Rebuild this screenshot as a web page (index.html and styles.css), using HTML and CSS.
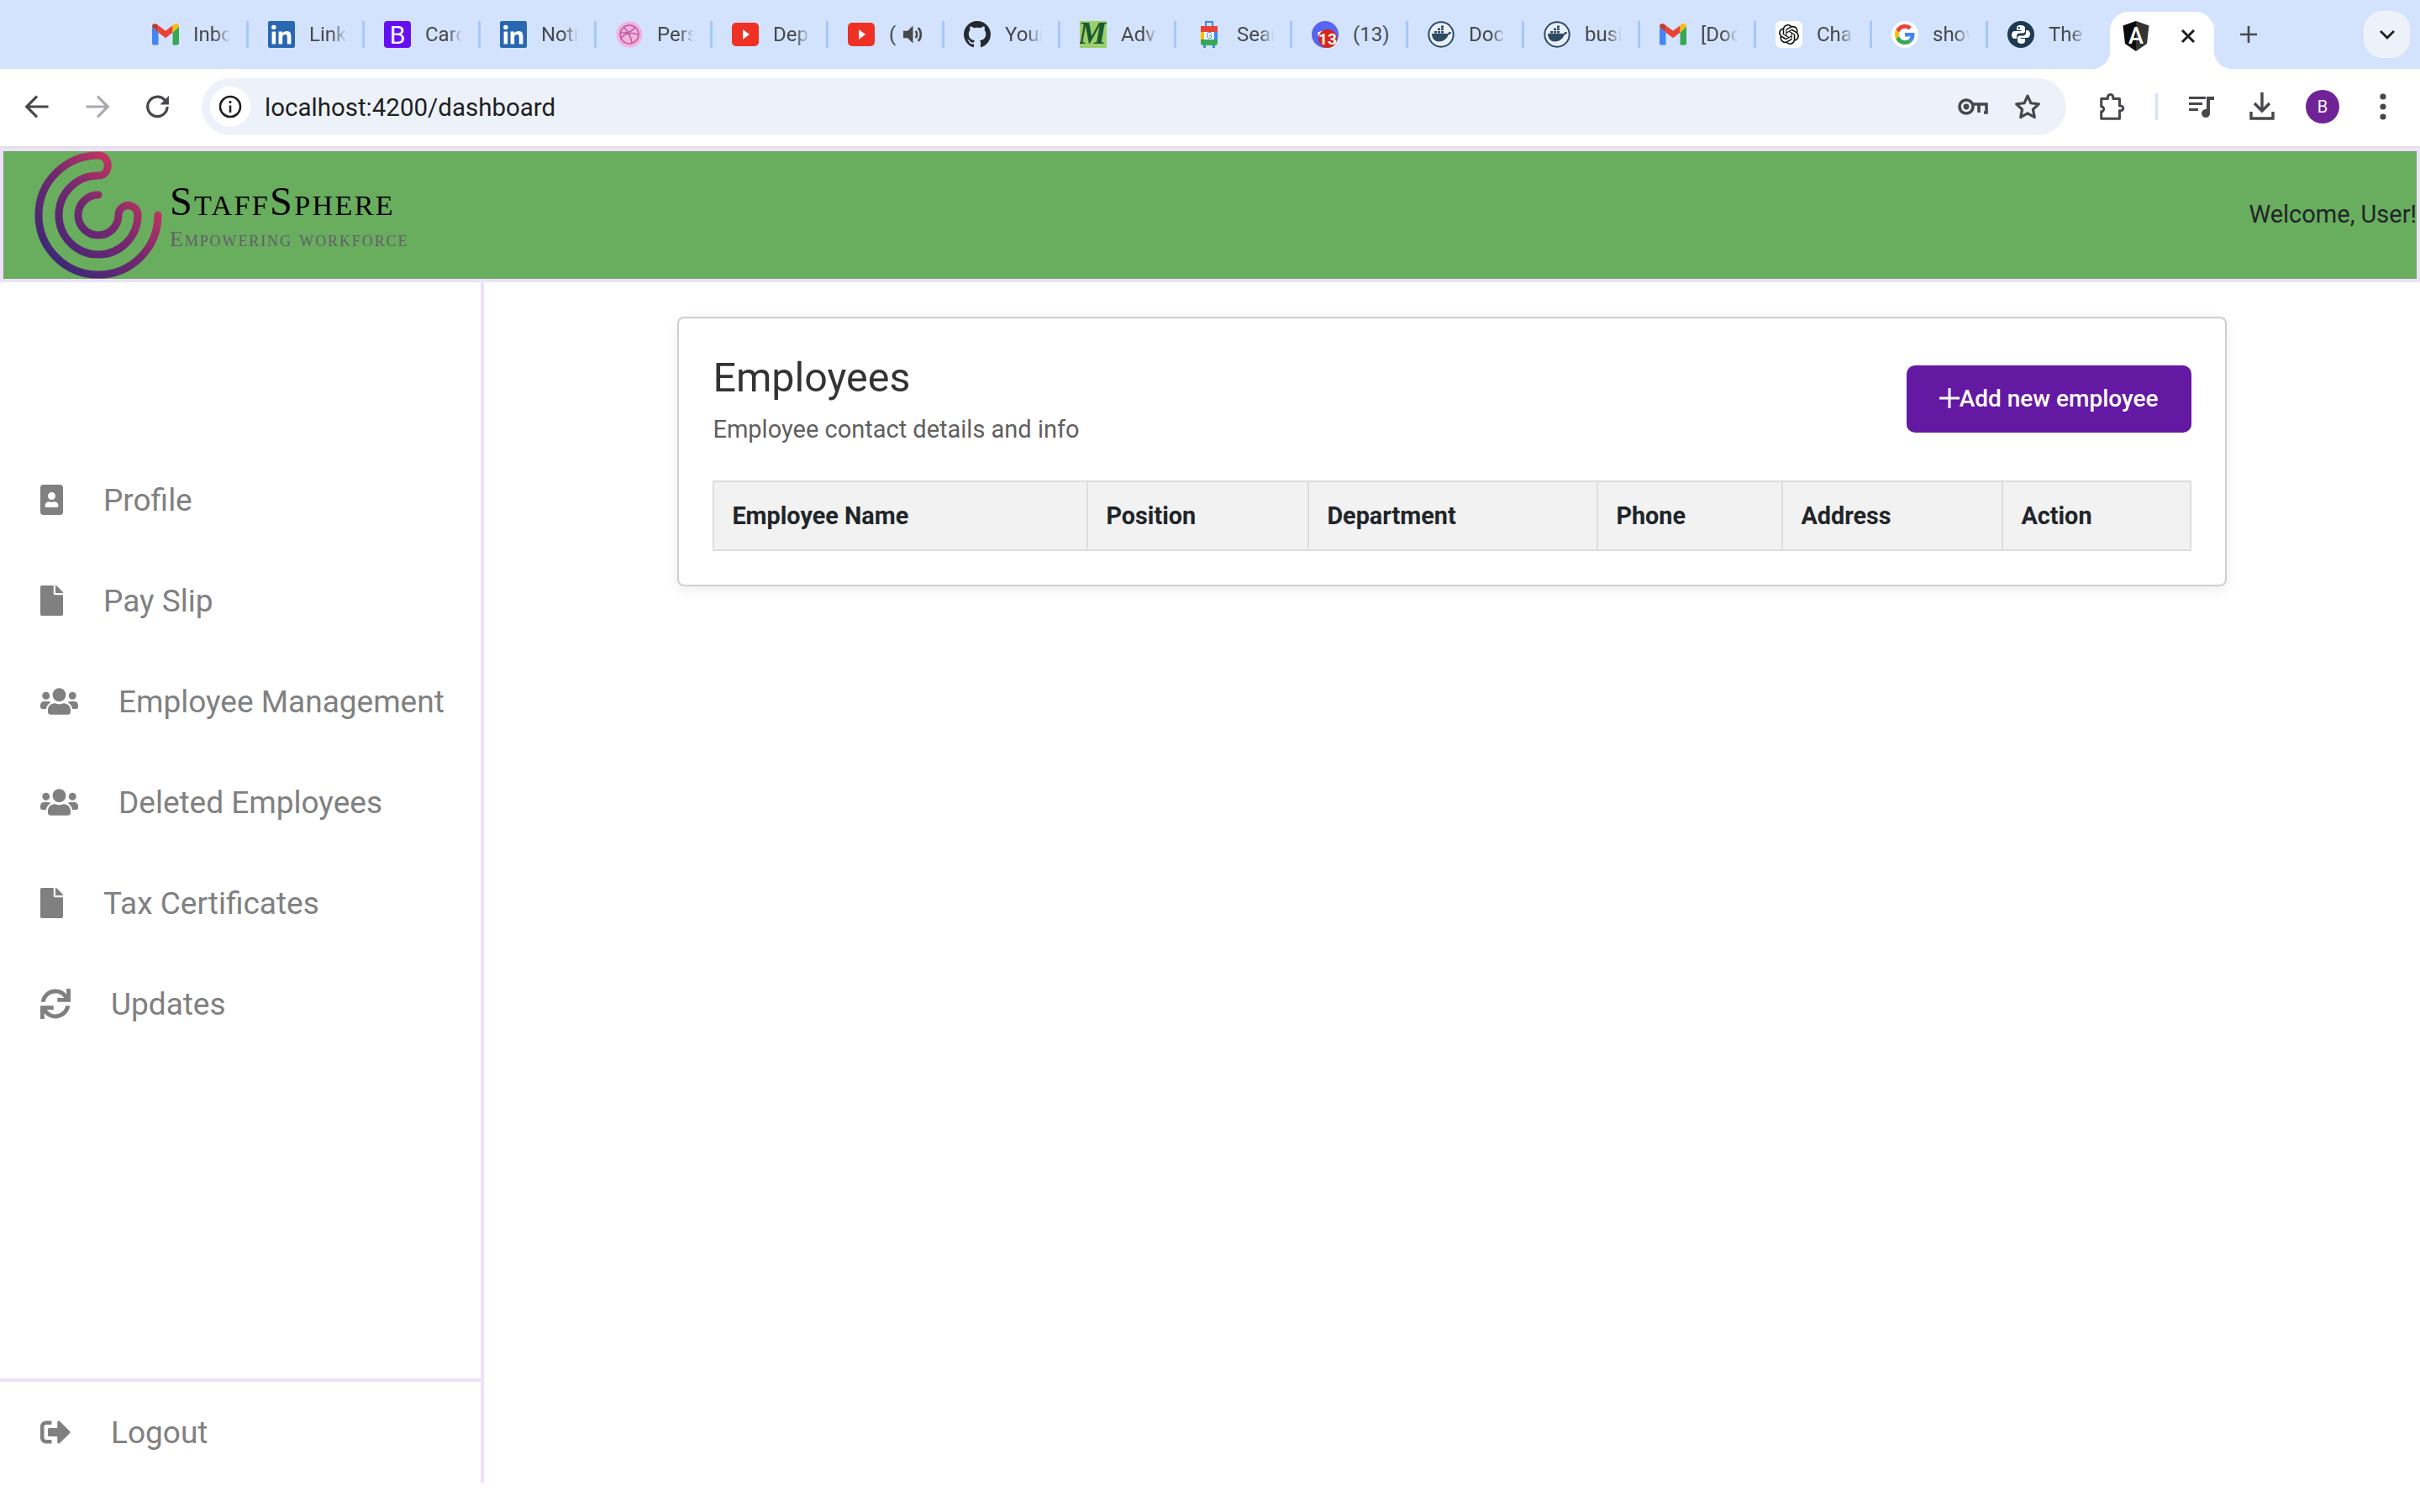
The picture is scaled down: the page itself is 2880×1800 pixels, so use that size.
FILE: index.html
```html
<!DOCTYPE html>
<html lang="en">
<head>
    <meta charset="UTF-8">
    <meta name="viewport" content="width=device-width, initial-scale=1.0">
    <title>StaffSphere</title>
    <link rel="stylesheet" href="styles.css">
</head>
<body>
    <!-- Icons used more than once -->
    <svg class="sprite" xmlns="http://www.w3.org/2000/svg">
        <symbol id="i-gmail" viewBox="0 0 30 24">
            <path fill="#4285f4" d="M0 3v19a2 2 0 0 0 2 2h5V10z"/>
            <path fill="#34a853" d="M30 3v19a2 2 0 0 1-2 2h-5V10z"/>
            <path fill="#c5372c" d="M0 3c0-3 3-4 5-2.500L7 2v8z"/>
            <path fill="#ea4335" d="M7 2l8 6 8-6v8l-8 6-8-6z"/>
            <path fill="#fbbc04" d="M30 3c0-3-3-4-5-2.500L23 2v8z"/>
        </symbol>
        <symbol id="i-linkedin" viewBox="0 0 28 28">
            <rect width="28" height="28" rx="2" fill="#2867b2"/>
            <rect x="4" y="11" width="4" height="13" fill="#fff"/>
            <circle cx="6" cy="6.500" r="2.400" fill="#fff"/>
            <path fill="#fff" d="M11 11h4v2c1-1.500 2.500-2.400 4.500-2.400 3.500 0 4.500 2.400 4.500 5.900V24h-4v-7c0-1.800-.5-3-2.200-3-1.800 0-2.800 1.300-2.800 3.100V24h-4z"/>
        </symbol>
        <symbol id="i-youtube" viewBox="0 0 32 28">
            <rect width="32" height="28" rx="5" fill="#ee3124"/>
            <path fill="#fff" d="M13 8l8 6-8 6z"/>
        </symbol>
        <symbol id="i-docker" viewBox="0 0 32 32">
            <circle cx="16" cy="16" r="14.700" fill="#eaf0fb" stroke="#2c4a63" stroke-width="2"/>
            <path fill="#2c4a63" d="M5 15h19c1-2 3-2.500 4-1.500-.5 2-2 3-3.500 3C23 21 19 24.500 13 24.500 8 24.500 5 20 5 15z"/>
            <path fill="#2c4a63" d="M8 12h3v2.500H8zM12 12h3v2.500h-3zM16 12h3v2.500h-3zM12 8.500h3V11h-3zM16 8.500h3V11h-3zM16 5.500h3V8h-3z"/>
        </symbol>
        <symbol id="i-file" viewBox="0 0 384 512">
            <path d="M224 136V0H24C10.700 0 0 10.700 0 24v464c0 13.300 10.700 24 24 24h336c13.300 0 24-10.700 24-24V160H248c-13.200 0-24-10.800-24-24zm160-14.100v6.100H256V0h6.100c6.400 0 12.500 2.500 17 7l97.900 98c4.500 4.500 7 10.600 7 16.900z"/>
        </symbol>
        <symbol id="i-users" viewBox="0 0 640 512">
            <path d="M96 224c35.300 0 64-28.700 64-64s-28.700-64-64-64-64 28.700-64 64 28.700 64 64 64zm448 0c35.300 0 64-28.700 64-64s-28.700-64-64-64-64 28.700-64 64 28.700 64 64 64zm32 32h-64c-17.600 0-33.500 7.100-45.100 18.600 40.300 22.100 68.900 62 75.100 109.400h66c17.700 0 32-14.300 32-32v-32c0-35.300-28.700-64-64-64zm-256 0c61.900 0 112-50.100 112-112S381.900 32 320 32 208 82.100 208 144s50.100 112 112 112zm76.800 32h-8.300c-20.800 10-43.900 16-68.500 16s-47.600-6-68.500-16h-8.300C179.600 288 128 339.600 128 403.200V432c0 26.500 21.500 48 48 48h288c26.500 0 48-21.500 48-48v-28.800c0-63.600-51.600-115.200-115.200-115.200zm-223.700-13.400C161.500 263.100 145.600 256 128 256H64c-35.300 0-64 28.700-64 64v32c0 17.700 14.300 32 32 32h65.900c6.300-47.400 34.900-87.300 75.200-109.400z"/>
        </symbol>
        <symbol id="i-portrait" viewBox="0 0 384 512">
            <path d="M336 0H48C21.500 0 0 21.500 0 48v416c0 26.500 21.500 48 48 48h288c26.500 0 48-21.500 48-48V48c0-26.500-21.500-48-48-48zM192 128c35.300 0 64 28.700 64 64s-28.700 64-64 64-64-28.700-64-64 28.700-64 64-64zm112 236.800c0 10.600-10 19.200-22.400 19.200H102.400C90 384 80 375.400 80 364.800v-19.200c0-31.800 30.100-57.600 67.200-57.600h5c12.300 5.100 25.700 8 39.800 8s27.600-2.900 39.800-8h5c37.100 0 67.200 25.800 67.200 57.600v19.200z"/>
        </symbol>
        <symbol id="i-sync" viewBox="0 0 512 512">
            <path d="M440.650 12.570l4 82.770A247.160 247.160 0 0 0 255.830 8C134.730 8 33.910 94.920 12.290 209.820A12 12 0 0 0 24.090 224h49.050a12 12 0 0 0 11.670-9.260 175.910 175.910 0 0 1 317-56.940l-101.460-4.860a12 12 0 0 0-12.570 12v47.410a12 12 0 0 0 12 12H500a12 12 0 0 0 12-12V12a12 12 0 0 0-12-12h-47.370a12 12 0 0 0-11.980 12.570zM255.830 432a175.610 175.610 0 0 1-146-77.800l101.800 4.870a12 12 0 0 0 12.570-12v-47.400a12 12 0 0 0-12-12H12a12 12 0 0 0-12 12V500a12 12 0 0 0 12 12h47.350a12 12 0 0 0 12-12.600l-4.150-82.570A247.170 247.170 0 0 0 255.830 504c121.110 0 221.930-86.920 243.550-201.820a12 12 0 0 0-11.800-14.180h-49.050a12 12 0 0 0-11.670 9.260A175.860 175.860 0 0 1 255.830 432z"/>
        </symbol>
        <symbol id="i-signout" viewBox="0 0 512 512">
            <path d="M497 273L329 441c-15 15-41 4.500-41-17v-96H152c-13.300 0-24-10.700-24-24v-96c0-13.300 10.700-24 24-24h136V88c0-21.400 25.900-32 41-17l168 168c9.300 9.400 9.300 24.600 0 34zM192 436v-40c0-6.600-5.400-12-12-12H96c-17.700 0-32-14.300-32-32V160c0-17.700 14.300-32 32-32h84c6.600 0 12-5.400 12-12V76c0-6.600-5.400-12-12-12H96c-53 0-96 43-96 96v192c0 53 43 96 96 96h84c6.600 0 12-5.400 12-12z"/>
        </symbol>
    </svg>

    <!-- Browser tabs -->
    <div class="tab-strip">
        <div class="tab"><svg class="tab-icon" viewBox="0 0 30 30"><use href="#i-gmail" y="3" width="30" height="24"/></svg><span class="tab-title">Inbox</span></div>
        <div class="tab"><svg class="tab-icon" viewBox="0 0 30 30"><use href="#i-linkedin" width="30" height="30"/></svg><span class="tab-title">Link</span></div>
        <div class="tab"><svg class="tab-icon" viewBox="0 0 32 32"><rect width="32" height="32" rx="4" fill="#6610f2"/><text x="16" y="27" class="svg-letter" font-size="30" fill="#fff">B</text></svg><span class="tab-title">Card</span></div>
        <div class="tab"><svg class="tab-icon" viewBox="0 0 30 30"><use href="#i-linkedin" width="30" height="30"/></svg><span class="tab-title">Noti</span></div>
        <div class="tab"><svg class="tab-icon" viewBox="0 0 32 32" fill="none" stroke="#b95c9d" stroke-width="1.500"><circle cx="16" cy="16" r="15.500" fill="#f3b3de" stroke="none"/><circle cx="16" cy="16" r="11"/><path d="M9 7c5 5 9 11 10 19M5.500 14c7 1 13-1 17-6M6 20c5-5 12-7 20-4"/></svg><span class="tab-title">Pers</span></div>
        <div class="tab"><svg class="tab-icon" viewBox="0 0 32 32"><use href="#i-youtube" y="2" width="32" height="28"/></svg><span class="tab-title">Dep</span></div>
        <div class="tab"><svg class="tab-icon" viewBox="0 0 32 32"><use href="#i-youtube" y="2" width="32" height="28"/></svg><span class="tab-title tab-title-short">(</span><svg class="tab-sound" viewBox="0 0 24 24" fill="none" stroke="#47484c" stroke-width="2.500"><path fill="#47484c" stroke="none" d="M1 8h5l6-6v20l-6-6H1z"/><path d="M15 8c2 2 2 6 0 8M18 4.500c4 4 4 11 0 15"/></svg></div>
        <div class="tab"><svg class="tab-icon" viewBox="0 0 16 16"><path fill="#24292e" d="M8 0C3.580 0 0 3.580 0 8c0 3.540 2.290 6.530 5.470 7.590.4.070.55-.17.55-.38 0-.19-.01-.82-.01-1.490-2.010.37-2.530-.49-2.690-.94-.09-.23-.48-.94-.82-1.130-.28-.15-.68-.52-.01-.53.63-.01 1.080.58 1.230.82.72 1.210 1.870.87 2.330.66.070-.52.28-.87.51-1.070-1.780-.2-3.640-.89-3.640-3.950 0-.87.31-1.590.82-2.150-.08-.2-.36-1.020.08-2.120 0 0 .67-.21 2.200.82.64-.18 1.320-.27 2-.27.68 0 1.360.09 2 .27 1.530-1.040 2.200-.82 2.200-.82.44 1.100.16 1.920.08 2.120.51.56.82 1.270.82 2.150 0 3.070-1.870 3.750-3.650 3.950.29.25.54.73.54 1.480 0 1.070-.01 1.930-.01 2.200 0 .21.15.46.55.38A8.013 8.013 0 0016 8c0-4.420-3.580-8-8-8z"/></svg><span class="tab-title">Your</span></div>
        <div class="tab"><svg class="tab-icon" viewBox="0 0 32 32"><rect width="32" height="32" fill="#9ccf6c"/><text x="15" y="27" class="svg-script" font-size="38" font-weight="700" fill="#17592f">M</text></svg><span class="tab-title">Adv</span></div>
        <div class="tab"><svg class="tab-icon" viewBox="0 0 32 32"><path fill="none" stroke="#4285f4" stroke-width="2" d="M12 6V1h8v5"/><rect x="6" y="6" width="20" height="7" fill="#ea4335"/><rect x="6" y="13" width="4" height="9" fill="#fbbc04"/><rect x="22" y="13" width="4" height="9" fill="#4285f4"/><rect x="10" y="13" width="12" height="9" fill="#fff"/><path fill="#34a853" d="M6 22h20v4a3 3 0 0 1-3 3H9a3 3 0 0 1-3-3z"/><text x="16" y="21" class="svg-letter" font-size="11" fill="#4285f4">G</text><rect x="9" y="29" width="3" height="3" fill="#4285f4"/><rect x="20" y="29" width="3" height="3" fill="#4285f4"/></svg><span class="tab-title">Sear</span></div>
        <div class="tab"><svg class="tab-icon" viewBox="0 0 32 32"><circle cx="16" cy="16" r="16" fill="#5865f2"/><path fill="#fff" d="M7 14c4-3 14-3 18 0l-1 4H8z"/><circle cx="19" cy="21" r="11" fill="#d62618"/><text x="19" y="28" class="svg-letter" font-size="19" font-weight="700" fill="#fff">13</text></svg><span class="tab-title tab-title-count">(13)</span></div>
        <div class="tab"><svg class="tab-icon" viewBox="0 0 32 32"><use href="#i-docker" width="32" height="32"/></svg><span class="tab-title">Doc</span></div>
        <div class="tab"><svg class="tab-icon" viewBox="0 0 32 32"><use href="#i-docker" width="32" height="32"/></svg><span class="tab-title">busi</span></div>
        <div class="tab"><svg class="tab-icon" viewBox="0 0 30 30"><use href="#i-gmail" y="3" width="30" height="24"/></svg><span class="tab-title">[Doc</span></div>
        <div class="tab"><svg class="tab-icon" viewBox="0 0 32 32"><rect width="32" height="32" rx="6" fill="#fff"/><path transform="translate(4 4)" fill="#111" d="M22.282 9.821a5.985 5.985 0 0 0-.516-4.910 6.046 6.046 0 0 0-6.510-2.900A6.065 6.065 0 0 0 4.981 4.180a5.985 5.985 0 0 0-3.998 2.900 6.046 6.046 0 0 0 .743 7.097 5.980 5.980 0 0 0 .510 4.911 6.051 6.051 0 0 0 6.515 2.900A5.985 5.985 0 0 0 13.260 24a6.056 6.056 0 0 0 5.772-4.206 5.990 5.990 0 0 0 3.997-2.900 6.056 6.056 0 0 0-.747-7.073zM13.260 22.430a4.476 4.476 0 0 1-2.876-1.040l.141-.081 4.779-2.758a.795.795 0 0 0 .392-.681v-6.737l2.020 1.168a.071.071 0 0 1 .038.052v5.583a4.504 4.504 0 0 1-4.494 4.494zM3.600 18.304a4.470 4.470 0 0 1-.535-3.014l.142.085 4.783 2.759a.771.771 0 0 0 .780 0l5.843-3.369v2.332a.080.080 0 0 1-.033.062L9.740 19.950a4.500 4.500 0 0 1-6.140-1.646zM2.340 7.896a4.485 4.485 0 0 1 2.366-1.973V11.600a.766.766 0 0 0 .388.676l5.815 3.355-2.020 1.168a.076.076 0 0 1-.071 0l-4.830-2.786A4.504 4.504 0 0 1 2.340 7.872zm16.597 3.855l-5.833-3.387L15.119 7.200a.076.076 0 0 1 .071 0l4.830 2.791a4.494 4.494 0 0 1-.676 8.105v-5.678a.790.790 0 0 0-.407-.667zm2.010-3.023l-.141-.085-4.774-2.782a.776.776 0 0 0-.785 0L9.409 9.230V6.897a.066.066 0 0 1 .028-.061l4.830-2.787a4.500 4.500 0 0 1 6.680 4.660zm-12.640 4.135l-2.020-1.164a.080.080 0 0 1-.038-.057V6.075a4.500 4.500 0 0 1 7.375-3.453l-.142.080L8.704 5.460a.795.795 0 0 0-.393.681zm1.097-2.365l2.602-1.500 2.607 1.500v2.999l-2.597 1.500-2.607-1.500Z"/></svg><span class="tab-title">Cha</span></div>
        <div class="tab"><svg class="tab-icon" viewBox="0 0 32 32"><circle cx="16" cy="16" r="16" fill="#fff"/><g transform="translate(4 4) scale(.5)"><path fill="#ea4335" d="M24 9.500c3.500 0 6.700 1.300 9.100 3.500l6.800-6.800C35.800 2.400 30.200 0 24 0 14.600 0 6.500 5.400 2.600 13.200l7.900 6.200C12.400 13.700 17.700 9.500 24 9.500z"/><path fill="#4285f4" d="M46.900 24.500c0-1.600-.1-3.100-.4-4.500H24v9h12.900c-.6 3-2.200 5.500-4.700 7.200l7.700 6c4.500-4.200 7-10.300 7-17.700z"/><path fill="#fbbc05" d="M10.500 28.600c-.5-1.400-.8-3-.8-4.600s.3-3.200.8-4.600l-7.900-6.200C.9 16.500 0 20.100 0 24s.9 7.500 2.600 10.800z"/><path fill="#34a853" d="M24 48c6.500 0 11.900-2.100 15.900-5.800l-7.700-6c-2.100 1.400-4.900 2.300-8.200 2.300-6.300 0-11.600-4.200-13.500-9.900l-7.900 6.200C6.500 42.600 14.600 48 24 48z"/></g></svg><span class="tab-title">show</span></div>
        <div class="tab tab-last"><svg class="tab-icon" viewBox="0 0 32 32"><circle cx="16" cy="16" r="16" fill="#1c3a52"/><path fill="#fff" d="M16 5c-4 0-5 1.500-5 3.500V11h5.500v1H9c-2.500 0-4 2-4 4.500S6.500 21 8.500 21H11v-3c0-2 1.500-3.500 3.500-3.500h4c1.500 0 2.500-1 2.500-2.500V8.500C21 6.500 19 5 16 5zm-2.300 2a1.200 1.200 0 1 1 0 2.400 1.200 1.200 0 0 1 0-2.400z"/><path fill="#fff" d="M16 27c4 0 5-1.500 5-3.500V21h-5.500v-1H23c2.500 0 4-2 4-4.500S25.500 11 23.500 11H22v3c0 2-1.500 3.500-3.500 3.500h-4c-1.500 0-2.500 1-2.500 2.500v3.500c0 2 2 3.500 4 3.500z"/></svg><span class="tab-title">The</span></div>

        <div class="tab-active">
            <svg class="tab-icon" viewBox="0 0 32 36"><path fill="#333" d="M16 0L31.500 5.500 29 27 16 36z"/><path fill="#0b0b0b" d="M16 0L.5 5.500 3 27l13 9z"/><text x="16" y="27" class="svg-letter" font-size="27" font-weight="500" fill="#fff">A</text></svg>
            <svg class="tab-close" viewBox="0 0 20 20" fill="none" stroke="#1f1f1f" stroke-width="3"><path d="M3 3l14 14M17 3L3 17"/></svg>
        </div>
        <svg class="new-tab" viewBox="0 0 24 24" fill="none" stroke="#47484c" stroke-width="2.600"><path d="M12 2v20M2 12h20"/></svg>
        <div class="tab-search">
            <svg viewBox="0 0 20 12" fill="none" stroke="#1f1f1f" stroke-width="2.800"><path d="M2 2l8 8 8-8"/></svg>
        </div>
    </div>

    <!-- Browser toolbar -->
    <div class="toolbar">
        <div class="tool-btn"><svg viewBox="0 0 26 26" fill="none" stroke="#47484c" stroke-width="2.600"><path d="M24 13H4M13 3L3 13l10 10"/></svg></div>
        <div class="tool-btn"><svg viewBox="0 0 26 26" fill="none" stroke="#a9aaad" stroke-width="2.600"><path d="M2 13h20M13 3l10 10-10 10"/></svg></div>
        <div class="tool-btn"><svg viewBox="0 0 26 26" fill="none" stroke="#47484c" stroke-width="2.600"><path d="M22 13a9.500 9.500 0 1 1-2.800-6.800L22 9"/><path fill="#47484c" stroke="none" d="M23.500 2.500v8.500H15z"/></svg></div>

        <div class="omnibox">
            <div class="site-chip"><svg viewBox="0 0 28 28" fill="none" stroke="#1f1f1f" stroke-width="2.600"><circle cx="14" cy="14" r="12"/><path d="M14 12.500V21"/><path d="M14 7v3"/></svg></div>
            <span class="url">localhost:4200/dashboard</span>
            <div class="omni-btn omni-key"><svg viewBox="0 0 36 22" fill="none" stroke="#47484c" stroke-width="3.600"><circle cx="10" cy="11" r="8"/><circle cx="10" cy="11" r="1.600"/><path d="M18 8h16v10h-3M25 8v10"/></svg></div>
            <div class="omni-btn"><svg viewBox="0 0 30 30" fill="none" stroke="#47484c" stroke-width="3"><path stroke-linejoin="round" d="M15 3l3.700 8 8.800 1-6.500 6 1.800 8.800L15 22.400l-7.800 4.400L9 18l-6.500-6 8.800-1z"/></svg></div>
        </div>

        <div class="tool-btn tool-ext"><svg viewBox="0 0 32 36" fill="none" stroke="#47484c" stroke-width="3.200" stroke-linejoin="round"><path d="M3 8h8c0-7 7-7 7 0h8v9c6-1 6 7 0 6v10H3V24c4 1 4-7 0-6z"/></svg></div>
        <div class="tool-sep"></div>
        <div class="tool-btn"><svg viewBox="0 0 32 32" fill="#47484c"><rect x="1" y="4" width="20" height="3"/><rect x="1" y="11" width="16" height="3"/><rect x="1" y="18" width="11" height="3"/><path d="M22 4h9v4h-5v16a5 5 0 1 1-4-4.900z"/></svg></div>
        <div class="tool-btn"><svg viewBox="0 0 32 34" fill="none" stroke="#47484c" stroke-width="3.400"><path d="M16 0v20M7 13l9 9 9-9M3 23v8h26v-8"/></svg></div>
        <div class="tool-btn"><span class="avatar">B</span></div>
        <div class="tool-btn"><svg class="menu-dots" viewBox="0 0 8 32" fill="#47484c"><circle cx="4" cy="4" r="3.600"/><circle cx="4" cy="16" r="3.600"/><circle cx="4" cy="28" r="3.600"/></svg></div>
    </div>

    <!-- App -->
    <div class="app">
        <header class="app-header">
            <svg class="logo" viewBox="40 180 156 152" fill="none">
                <defs>
                    <linearGradient id="spiral" gradientUnits="userSpaceOnUse" x1="65" y1="310" x2="170" y2="205">
                        <stop offset="0" stop-color="#3f2876"/>
                        <stop offset=".5" stop-color="#74296f"/>
                        <stop offset="1" stop-color="#d7365f"/>
                    </linearGradient>
                </defs>
                <path stroke="url(#spiral)" stroke-width="9" stroke-linecap="round" d="M188 256A71 71 0 1 1 117 185C132 185 132 209 117 209A47 47 0 1 0 164 256A11.500 11.500 0 0 0 141 256A24 24 0 1 1 117 232"/>
            </svg>
            <div class="brand">
                <div class="brand-name">StaffSphere</div>
                <div class="brand-tag">Empowering workforce</div>
            </div>
            <div class="welcome">Welcome, User!</div>
        </header>

        <div class="app-body">
            <aside class="sidebar">
                <nav class="side-nav">
                    <a class="side-link"><svg class="side-icon icon-narrow"><use href="#i-portrait"/></svg>Profile</a>
                    <a class="side-link"><svg class="side-icon icon-narrow"><use href="#i-file"/></svg>Pay Slip</a>
                    <a class="side-link"><svg class="side-icon icon-wide"><use href="#i-users"/></svg>Employee Management</a>
                    <a class="side-link"><svg class="side-icon icon-wide"><use href="#i-users"/></svg>Deleted Employees</a>
                    <a class="side-link"><svg class="side-icon icon-narrow"><use href="#i-file"/></svg>Tax Certificates</a>
                    <a class="side-link"><svg class="side-icon icon-square"><use href="#i-sync"/></svg>Updates</a>
                </nav>
                <div class="side-foot">
                    <a class="side-link"><svg class="side-icon icon-square"><use href="#i-signout"/></svg>Logout</a>
                </div>
            </aside>

            <main class="content">
                <section class="card">
                    <div class="card-head">
                        <div>
                            <h2 class="card-title">Employees</h2>
                            <p class="card-sub">Employee contact details and info</p>
                        </div>
                        <button class="add-btn"><svg viewBox="0 0 24 24" fill="none" stroke="#fff" stroke-width="3"><path d="M12 0v24M0 12h24"/></svg>Add new employee</button>
                    </div>
                    <table class="emp-table">
                        <colgroup>
                            <col class="col-name">
                            <col class="col-pos">
                            <col class="col-dept">
                            <col class="col-phone">
                            <col class="col-addr">
                            <col class="col-action">
                        </colgroup>
                        <thead>
                            <tr>
                                <th>Employee Name</th>
                                <th>Position</th>
                                <th>Department</th>
                                <th>Phone</th>
                                <th>Address</th>
                                <th>Action</th>
                            </tr>
                        </thead>
                    </table>
                </section>
            </main>
        </div>
    </div>
</body>
</html>
```

FILE: styles.css
```css
/* General */
* {
    box-sizing: border-box;
}

body {
    margin: 0;
    background-color: #fff;
    font-family: Roboto, "Liberation Sans", sans-serif;
    color: #212529;
}

.sprite {
    display: none;
}

.svg-letter {
    font-family: Roboto, sans-serif;
    text-anchor: middle;
}

.svg-script {
    font-family: "Liberation Serif", serif;
    font-style: italic;
    text-anchor: middle;
}

/* Tab strip */
.tab-strip {
    display: flex;
    align-items: center;
    height: 82px;
    padding-left: 158px;
    background-color: #d3e3fd;
}

.tab {
    display: flex;
    align-items: center;
    flex: none;
    width: 138px;
    height: 32px;
    padding-left: 23px;
    border-right: 3px solid #a8c7fa;
}

.tab-last {
    border-right: none;
}

.tab-icon {
    flex: none;
    width: 32px;
    height: 32px;
    margin-right: 17px;
}

.tab-title {
    width: 44px;
    overflow: hidden;
    white-space: nowrap;
    font-size: 24px;
    color: #47484c;
    -webkit-mask-image: linear-gradient(90deg, #000 60%, transparent);
    mask-image: linear-gradient(90deg, #000 60%, transparent);
}

.tab-title-short {
    width: 8px;
    margin-right: 8px;
    -webkit-mask-image: none;
    mask-image: none;
}

.tab-title-count {
    -webkit-mask-image: none;
    mask-image: none;
}

.tab-sound {
    flex: none;
    width: 25px;
    height: 28px;
}

.tab-active {
    position: relative;
    display: flex;
    align-items: center;
    flex: none;
    align-self: flex-end;
    width: 124px;
    height: 68px;
    margin-left: 7px;
    padding: 0 21px 10px 15px;
    border-radius: 22px 22px 0 0;
    background-color: #fff;
}

.tab-active::before,
.tab-active::after {
    content: "";
    position: absolute;
    bottom: 0;
    width: 22px;
    height: 22px;
}

.tab-active::before {
    left: -22px;
    background: radial-gradient(circle at 0 0, transparent 22px, #fff 22.500px);
}

.tab-active::after {
    right: -22px;
    background: radial-gradient(circle at 100% 0, transparent 22px, #fff 22.500px);
}

.tab-active .tab-icon {
    height: 36px;
}

.tab-close {
    width: 20px;
    height: 20px;
    margin-left: auto;
}

.new-tab {
    flex: none;
    width: 24px;
    height: 24px;
    margin-left: 29px;
}

.tab-search {
    display: flex;
    align-items: center;
    justify-content: center;
    width: 55px;
    height: 56px;
    margin-left: auto;
    margin-right: 12px;
    border-radius: 22px;
    background-color: #edf2fa;
}

.tab-search svg {
    width: 20px;
    height: 12px;
}

/* Toolbar */
.toolbar {
    display: flex;
    align-items: center;
    height: 94px;
    padding: 0 8px 2px 8px;
    border-bottom: 2px solid #e1e1e1;
    border-radius: 18px 18px 0 0;
    background-color: #fff;
}

.tool-btn {
    display: flex;
    align-items: center;
    justify-content: center;
    flex: none;
    width: 72px;
    height: 60px;
}

.tool-btn svg {
    width: 32px;
    height: 34px;
}

.tool-btn .menu-dots {
    width: 8px;
}

.tool-sep {
    flex: none;
    width: 3px;
    height: 32px;
    margin: 0 16px;
    background-color: #d3e3fd;
}

.avatar {
    display: flex;
    align-items: center;
    justify-content: center;
    width: 40px;
    height: 40px;
    border-radius: 50%;
    background-color: #6f2396;
    font-size: 20px;
    color: #fff;
}

.omnibox {
    display: flex;
    align-items: center;
    flex: 1;
    height: 68px;
    margin: 0 18px 0 16px;
    padding: 0 14px 0 10px;
    border-radius: 34px;
    background-color: #edf2fa;
}

.site-chip {
    display: flex;
    align-items: center;
    justify-content: center;
    width: 48px;
    height: 48px;
    border-radius: 50%;
    background-color: #fff;
}

.site-chip svg {
    width: 28px;
    height: 28px;
}

.url {
    margin-left: 17px;
    padding-top: 1px;
    font-size: 29.500px;
    color: #1f1f1f;
}

.omni-btn {
    display: flex;
    align-items: center;
    justify-content: center;
    width: 65px;
}

.omni-btn svg {
    width: 32px;
    height: 32px;
}

.omni-key {
    margin-left: auto;
}

.omni-key svg {
    width: 36px;
    height: 22px;
}

/* App shell */
.app {
    display: flex;
    flex-direction: column;
    height: 1589px;
}

.app-header {
    display: flex;
    align-items: center;
    flex: none;
    height: 160px;
    padding-left: 36px;
    border: 4px solid #eee0fb;
    background-color: #69ad5e;
}

.logo {
    flex: none;
    width: 156px;
    height: 152px;
}

.brand {
    margin-left: 6px;
    font-family: "Liberation Serif", serif;
    font-variant: small-caps;
}

.brand-name {
    font-size: 48px;
    line-height: 54px;
    letter-spacing: 2.400px;
    color: #000;
}

.brand-tag {
    margin-top: 4px;
    font-size: 26px;
    line-height: 28px;
    letter-spacing: 1.900px;
    color: #62606a;
}

.welcome {
    margin-left: auto;
    margin-bottom: 2px;
    font-size: 29px;
}

.app-body {
    display: flex;
    flex: 1;
    min-height: 0;
}

/* Sidebar */
.sidebar {
    display: flex;
    flex-direction: column;
    justify-content: space-between;
    flex: none;
    width: 576px;
    border-right: 4px solid #eee0fb;
}

.side-nav {
    padding-top: 199px;
}

.side-link {
    display: flex;
    align-items: center;
    height: 120px;
    padding-left: 48px;
    font-size: 37px;
    color: #808080;
}

.side-icon {
    flex: none;
    height: 36px;
    margin-right: 48px;
    fill: #808080;
}

.icon-narrow {
    width: 27px;
}

.icon-wide {
    width: 45px;
}

.icon-square {
    width: 36px;
}

.side-foot {
    border-top: 4px solid #eee0fb;
}

/* Main content */
.content {
    flex: 1;
    min-width: 0;
    padding-top: 41px;
}

.card {
    width: 80%;
    margin: 0 auto;
    padding: 41px 40px 40px;
    border: 2px solid #cfcfcf;
    border-radius: 8px;
    background-color: #fff;
    box-shadow: 0 4px 16px rgba(0, 0, 0, 0.08);
}

.card-head {
    display: flex;
    align-items: center;
    justify-content: space-between;
    margin-bottom: 39px;
}

.card-title {
    margin: 1px 0 10px;
    font-size: 48.400px;
    font-weight: 400;
    line-height: 58px;
    color: #333;
}

.card-sub {
    margin: 0;
    font-size: 29px;
    line-height: 44px;
    color: #5f5f5f;
}

.add-btn {
    display: flex;
    align-items: center;
    height: 80px;
    margin-bottom: 3px;
    padding: 0 39px 2px;
    border: none;
    border-radius: 10px;
    background-color: #6419a3;
    font-family: inherit;
    font-size: 28px;
    font-weight: 500;
    color: #fff;
}

.add-btn svg {
    width: 24px;
    height: 24px;
}

/* Table */
.emp-table {
    width: calc(100% - 2px);
    border-collapse: collapse;
    table-layout: fixed;
}

.emp-table th {
    height: 82px;
    padding: 0 21px;
    border: 2px solid #ddd;
    background-color: #f2f2f2;
    text-align: left;
    font-size: 28.800px;
    font-weight: 700;
}

.col-name {
    width: 445px;
}

.col-pos {
    width: 263px;
}

.col-dept {
    width: 344px;
}

.col-phone {
    width: 220px;
}

.col-addr {
    width: 262px;
}

.col-action {
    width: 224px;
}
```
